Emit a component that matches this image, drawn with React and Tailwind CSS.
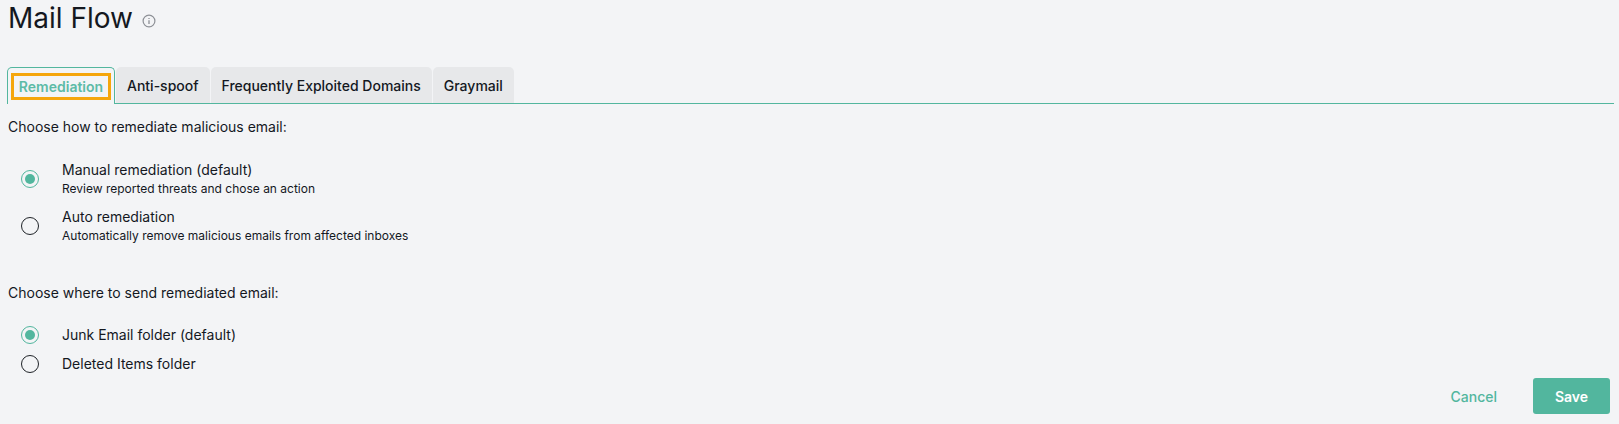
const tabs = ['Anti-spoof', 'Frequently Exploited Domains', 'Graymail'];

function Radio({ checked }) {
  return (
    <span
      className={`flex h-[18px] w-[18px] shrink-0 items-center justify-center rounded-full border-[1.5px] ${
        checked ? 'border-[#52b69e]' : 'border-[#1f2328]'
      }`}
    >
      {checked && <span className="h-[10px] w-[10px] rounded-full bg-[#52b69e]" />}
    </span>
  );
}

function Option({ checked, label, hint }) {
  return (
    <div className="flex items-center">
      <div className="flex w-[62px] justify-center pr-[2px] pl-0">
        <Radio checked={checked} />
      </div>
      <div>
        <div className="text-[14px] leading-[20px]">{label}</div>
        {hint && <div className="text-[12px] leading-[18px]">{hint}</div>}
      </div>
    </div>
  );
}

export default function App() {
  return (
    <div className="h-[424px] overflow-hidden bg-[#f3f4f6] font-['Inter',sans-serif] text-[#14181f]">
      <div className="flex items-center pl-[8px]">
        <h1 className="text-[28px] leading-[36px] font-normal">Mail Flow</h1>
        <svg className="mt-[6px] ml-[9px]" width="14" height="14" viewBox="0 0 14 14" fill="none" stroke="#8d9096">
          <circle cx="7" cy="7" r="5.9" strokeWidth="1.2" />
          <path d="M7 6.3v3.6M7 4.1v1" strokeWidth="1.3" />
        </svg>
      </div>

      <div className="mt-[31px] ml-[7px] mr-[5px] flex h-[37px] items-end border-b border-[#52b69e]">
        <div className="relative top-[1px] flex h-[37px] w-[108px] items-center justify-center rounded-t-[5px] border border-b-0 border-[#52b69e] bg-[#f3f4f6]">
          <span className="flex h-[27px] w-[100px] items-center justify-center border-[3px] border-[#f5a60c] text-[14px] font-semibold text-[#5dbba6]">
            Remediation
          </span>
        </div>
        {tabs.map((tab) => (
          <div
            key={tab}
            className="ml-[1px] flex h-[36px] items-center rounded-t-[5px] bg-[#e7e8ea] px-[11px] text-[14px] font-medium"
          >
            {tab}
          </div>
        ))}
      </div>

      <p className="mt-[13px] pl-[8px] text-[14px] leading-[20px]">Choose how to remediate malicious email:</p>

      <div className="mt-[23px] flex flex-col gap-[9px]">
        <Option checked label="Manual remediation (default)" hint="Review reported threats and chose an action" />
        <Option label="Auto remediation" hint="Automatically remove malicious emails from affected inboxes" />
      </div>

      <p className="mt-[38px] pl-[8px] text-[14px] leading-[20px]">Choose where to send remediated email:</p>

      <div className="mt-[22px] flex flex-col gap-[9px]">
        <Option checked label="Junk Email folder (default)" />
        <Option label="Deleted Items folder" />
      </div>

      <div className="mt-[4px] flex items-center justify-end pr-[9px]">
        <button className="mr-[36px] text-[14px] font-medium text-[#52b69e]">Cancel</button>
        <button className="h-[36px] w-[77px] rounded-[3px] bg-[#52b69e] text-[14px] font-semibold text-white">Save</button>
      </div>
    </div>
  );
}
